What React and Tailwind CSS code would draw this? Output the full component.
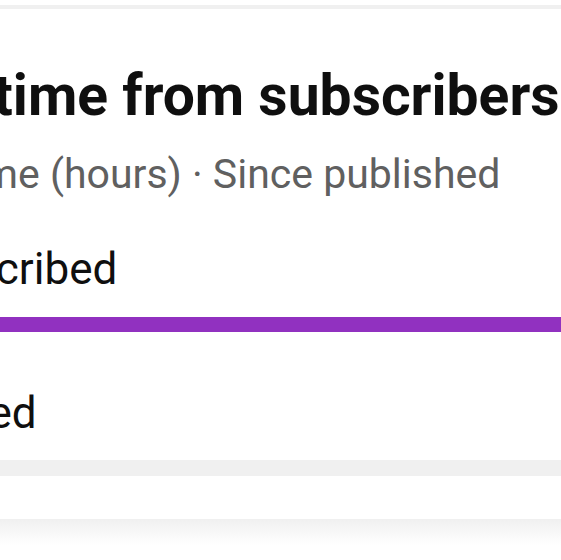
export default function App() {
  return (
    <div className="w-[561px] h-[560px] bg-white overflow-hidden font-['Roboto',sans-serif]">
      {/* top divider */}
      <div className="h-[5px]" />
      <div className="h-[4px] bg-[#f0f0f0]" />

      <section className="pt-[54px] whitespace-nowrap">
        <h2 className="ml-[-181px] text-[57px] leading-[66px] font-bold text-[#0f0f0f]">
          Watch time from subscribers
        </h2>
        <p className="mt-[20px] ml-[-167px] text-[41px] leading-[50px] text-[#606060]">
          Watch time (hours) · Since published
        </p>

        <div className="mt-[45px]">
          <div className="ml-[-102px] text-[44px] leading-[50px] text-[#0f0f0f]">Subscribed</div>
          <div className="mt-[23px] h-[15px] bg-[#9131c0]" />
        </div>

        <div className="mt-[56px]">
          <div className="ml-[-261px] text-[44px] leading-[50px] text-[#0f0f0f]">Not subscribed</div>
        </div>
      </section>

      <div className="mt-[22px] h-[16px] bg-[#f0f0f0]" />
      <div className="h-[43px]" />
      <div className="h-[26px] bg-gradient-to-b from-[#f0f0f0] to-white" />
    </div>
  )
}
